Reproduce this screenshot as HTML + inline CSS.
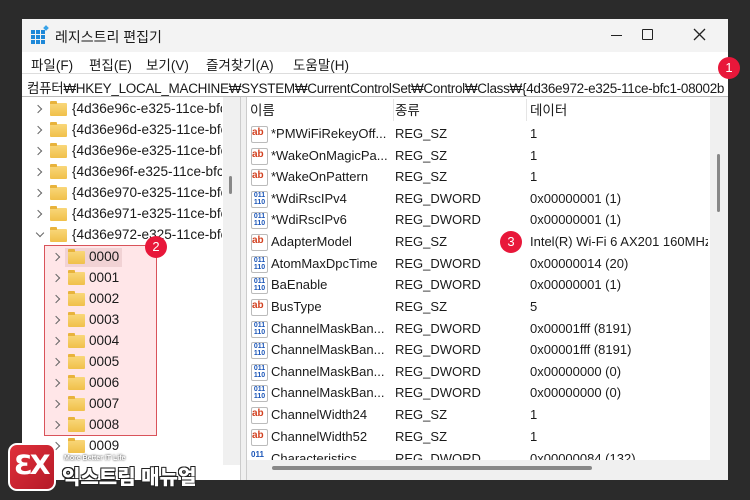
<!DOCTYPE html>
<html><head><meta charset="utf-8"><style>
*{margin:0;padding:0;box-sizing:border-box}
body{width:750px;height:500px;background:#2b2b2b;position:relative;overflow:hidden;font-family:"Liberation Sans","Noto Sans CJK KR",sans-serif;font-size:13px;color:#1a1a1a}
.a{position:absolute;white-space:nowrap}
#win{left:22px;top:19px;width:706px;height:461px;background:#f0f0f0;overflow:hidden}
.fold{position:absolute;width:17px;height:13px;background:linear-gradient(#f9d77a,#f0c04a);border-radius:1px}
.fold:before{content:"";position:absolute;left:0;top:-2px;width:7px;height:3px;background:#e8b33c;border-radius:1px 1px 0 0}
.chev{position:absolute;width:6px;height:6px;border-right:1.3px solid #666;border-bottom:1.3px solid #666;transform:rotate(-45deg)}
.ic{position:absolute;width:17px;height:17px;font-size:10px;font-weight:bold;line-height:11px}
.ab{color:#d2401f;border:1px solid #bbb;border-radius:2px;background:#fff}
.dw{color:#1a55b8;font-size:7px;line-height:7px;border:1px solid #bbb;border-radius:2px;background:#fff;text-align:center}
.badge{position:absolute;width:22px;height:22px;border-radius:50%;background:#e8173a;color:#fff;font-size:13px;text-align:center;line-height:22px}
.tr{font-size:13.6px}
</style></head><body>
<div id="win" class="a">
 <div class="a" style="left:0;top:0;width:706px;height:33px;background:#f3f3f3"></div>
 <svg class="a" style="left:8px;top:6px" width="20" height="20" viewBox="0 0 20 20"><g fill="#1e88d8"><rect x="1" y="5" width="4" height="4"/><rect x="6" y="5" width="4" height="4"/><rect x="11" y="5" width="4" height="4"/><rect x="1" y="10" width="4" height="4"/><rect x="6" y="10" width="4" height="4"/><rect x="11" y="10" width="4" height="4"/><rect x="1" y="15" width="4" height="4"/><rect x="6" y="15" width="4" height="4"/><rect x="11" y="15" width="4" height="4"/></g><rect x="14" y="1" width="4" height="4" fill="#39a3e8" transform="rotate(45 16 3)"/></svg>
 <div class="a" style="left:33px;top:8px;font-size:14px">레지스트리 편집기</div>
 <div class="a" style="left:589px;top:16px;width:11px;height:1.3px;background:#222"></div>
 <div class="a" style="left:620px;top:10px;width:11px;height:11px;border:1.3px solid #222;border-radius:1px"></div>
 <svg class="a" style="left:671px;top:9px" width="13" height="13"><path d="M1 1L12 12M12 1L1 12" stroke="#222" stroke-width="1.3"/></svg>
 <div class="a" style="left:0;top:33px;width:706px;height:21px;background:#fff"></div>
 <div class="a" style="left:9px;top:35px;font-size:13.5px">파일(F)</div>
 <div class="a" style="left:67px;top:35px;font-size:13.5px">편집(E)</div>
 <div class="a" style="left:124px;top:35px;font-size:13.5px">보기(V)</div>
 <div class="a" style="left:184px;top:35px;font-size:13.5px">즐겨찾기(A)</div>
 <div class="a" style="left:271px;top:35px;font-size:13.5px">도움말(H)</div>
 <div class="a" style="left:0;top:54px;width:706px;height:24px;background:#fff;border-top:1px solid #ddd;border-bottom:1px solid #bbb"></div>
 <div class="a" style="left:5px;top:58px;font-size:13.5px;letter-spacing:-0.3px">컴퓨터₩HKEY_LOCAL_MACHINE₩SYSTEM₩CurrentControlSet₩Control₩Class₩{4d36e972-e325-11ce-bfc1-08002b</div>
 <div class="a" style="left:0;top:78px;width:218px;height:383px;background:#fff"></div>
 <div class="a" style="left:201px;top:78px;width:17px;height:368px;background:#f0f0f0"></div>
 <div class="a" style="left:207px;top:157px;width:3px;height:18px;background:#888;border-radius:2px"></div>
 <div class="a" style="left:218px;top:78px;width:7px;height:383px;background:#f0f0f0;border-left:1px solid #ccc;border-right:1px solid #ccc"></div>
 <div class="a" style="left:225px;top:78px;width:481px;height:383px;background:#fff"></div>
 <div class="a" style="left:688px;top:78px;width:18px;height:365px;background:#f0f0f0"></div>
 <div class="a" style="left:695px;top:135px;width:3px;height:58px;background:#888;border-radius:2px"></div>
 <div class="a" style="left:225px;top:441px;width:481px;height:20px;background:#f0f0f0"></div>
 <div class="a" style="left:250px;top:447px;width:320px;height:4px;background:#888;border-radius:2px"></div>
 <div class="a" style="left:228px;top:80px;font-size:13.5px">이름</div>
 <div class="a" style="left:371px;top:80px;width:1px;height:22px;background:#e5e5e5"></div>
 <div class="a" style="left:373px;top:80px;font-size:13.5px">종류</div>
 <div class="a" style="left:504px;top:80px;width:1px;height:22px;background:#e5e5e5"></div>
 <div class="a" style="left:508px;top:80px;font-size:13.5px">데이터</div>
</div>

<div class="a" style="left:22px;top:97px;width:200px;height:360px;overflow:hidden">
<div style="position:absolute;left:-22px;top:-97px;width:750px;height:500px">
<div class="chev a" style="left:35px;top:106px"></div><div class="fold a" style="left:50px;top:103px"></div><div class="a tr" style="left:72px;top:101px">{4d36e96c-e325-11ce-bfc1</div>
<div class="chev a" style="left:35px;top:127px"></div><div class="fold a" style="left:50px;top:124px"></div><div class="a tr" style="left:72px;top:122px">{4d36e96d-e325-11ce-bfc1</div>
<div class="chev a" style="left:35px;top:148px"></div><div class="fold a" style="left:50px;top:145px"></div><div class="a tr" style="left:72px;top:143px">{4d36e96e-e325-11ce-bfc1</div>
<div class="chev a" style="left:35px;top:169px"></div><div class="fold a" style="left:50px;top:166px"></div><div class="a tr" style="left:72px;top:164px">{4d36e96f-e325-11ce-bfc1</div>
<div class="chev a" style="left:35px;top:190px"></div><div class="fold a" style="left:50px;top:187px"></div><div class="a tr" style="left:72px;top:185px">{4d36e970-e325-11ce-bfc1</div>
<div class="chev a" style="left:35px;top:211px"></div><div class="fold a" style="left:50px;top:208px"></div><div class="a tr" style="left:72px;top:206px">{4d36e971-e325-11ce-bfc1</div>
<div class="chev a" style="left:37px;top:230px;transform:rotate(45deg)"></div><div class="fold a" style="left:50px;top:229px"></div><div class="a tr" style="left:72px;top:227px">{4d36e972-e325-11ce-bfc1</div>
</div></div>
<div class="a" style="left:44px;top:245px;width:113px;height:191px;background:rgba(255,80,90,0.14);border:1.3px solid #d9535a"></div>
<div class="a" style="left:65px;top:248px;width:57px;height:19px;background:rgba(200,150,150,0.25)"></div>
<div class="chev a" style="left:53px;top:254px"></div><div class="fold a" style="left:68px;top:251px"></div><div class="a tr" style="left:89px;top:249px">0000</div>
<div class="chev a" style="left:53px;top:275px"></div><div class="fold a" style="left:68px;top:272px"></div><div class="a tr" style="left:89px;top:270px">0001</div>
<div class="chev a" style="left:53px;top:296px"></div><div class="fold a" style="left:68px;top:293px"></div><div class="a tr" style="left:89px;top:291px">0002</div>
<div class="chev a" style="left:53px;top:317px"></div><div class="fold a" style="left:68px;top:314px"></div><div class="a tr" style="left:89px;top:312px">0003</div>
<div class="chev a" style="left:53px;top:338px"></div><div class="fold a" style="left:68px;top:335px"></div><div class="a tr" style="left:89px;top:333px">0004</div>
<div class="chev a" style="left:53px;top:359px"></div><div class="fold a" style="left:68px;top:356px"></div><div class="a tr" style="left:89px;top:354px">0005</div>
<div class="chev a" style="left:53px;top:380px"></div><div class="fold a" style="left:68px;top:377px"></div><div class="a tr" style="left:89px;top:375px">0006</div>
<div class="chev a" style="left:53px;top:401px"></div><div class="fold a" style="left:68px;top:398px"></div><div class="a tr" style="left:89px;top:396px">0007</div>
<div class="chev a" style="left:53px;top:422px"></div><div class="fold a" style="left:68px;top:419px"></div><div class="a tr" style="left:89px;top:417px">0008</div>
<div class="chev a" style="left:53px;top:443px"></div><div class="fold a" style="left:68px;top:440px"></div><div class="a tr" style="left:89px;top:438px">0009</div>

<div style="font-size:13px">
<div class="ic ab a" style="left:251px;top:126px">ab</div><div class="a" style="left:271px;top:126px">*PMWiFiRekeyOff...</div><div class="a" style="left:395px;top:126px">REG_SZ</div><div class="a" style="left:530px;top:126px">1</div>
<div class="ic ab a" style="left:251px;top:148px">ab</div><div class="a" style="left:271px;top:148px">*WakeOnMagicPa...</div><div class="a" style="left:395px;top:148px">REG_SZ</div><div class="a" style="left:530px;top:148px">1</div>
<div class="ic ab a" style="left:251px;top:169px">ab</div><div class="a" style="left:271px;top:169px">*WakeOnPattern</div><div class="a" style="left:395px;top:169px">REG_SZ</div><div class="a" style="left:530px;top:169px">1</div>
<div class="ic dw a" style="left:251px;top:191px">011<br>110</div><div class="a" style="left:271px;top:191px">*WdiRscIPv4</div><div class="a" style="left:395px;top:191px">REG_DWORD</div><div class="a" style="left:530px;top:191px">0x00000001 (1)</div>
<div class="ic dw a" style="left:251px;top:212px">011<br>110</div><div class="a" style="left:271px;top:212px">*WdiRscIPv6</div><div class="a" style="left:395px;top:212px">REG_DWORD</div><div class="a" style="left:530px;top:212px">0x00000001 (1)</div>
<div class="ic ab a" style="left:251px;top:234px">ab</div><div class="a" style="left:271px;top:234px">AdapterModel</div><div class="a" style="left:395px;top:234px">REG_SZ</div><div class="a" style="left:530px;top:234px;width:178px;overflow:hidden">Intel(R) Wi-Fi 6 AX201 160MHz</div>
<div class="ic dw a" style="left:251px;top:256px">011<br>110</div><div class="a" style="left:271px;top:256px">AtomMaxDpcTime</div><div class="a" style="left:395px;top:256px">REG_DWORD</div><div class="a" style="left:530px;top:256px">0x00000014 (20)</div>
<div class="ic dw a" style="left:251px;top:277px">011<br>110</div><div class="a" style="left:271px;top:277px">BaEnable</div><div class="a" style="left:395px;top:277px">REG_DWORD</div><div class="a" style="left:530px;top:277px">0x00000001 (1)</div>
<div class="ic ab a" style="left:251px;top:299px">ab</div><div class="a" style="left:271px;top:299px">BusType</div><div class="a" style="left:395px;top:299px">REG_SZ</div><div class="a" style="left:530px;top:299px">5</div>
<div class="ic dw a" style="left:251px;top:321px">011<br>110</div><div class="a" style="left:271px;top:321px">ChannelMaskBan...</div><div class="a" style="left:395px;top:321px">REG_DWORD</div><div class="a" style="left:530px;top:321px">0x00001fff (8191)</div>
<div class="ic dw a" style="left:251px;top:342px">011<br>110</div><div class="a" style="left:271px;top:342px">ChannelMaskBan...</div><div class="a" style="left:395px;top:342px">REG_DWORD</div><div class="a" style="left:530px;top:342px">0x00001fff (8191)</div>
<div class="ic dw a" style="left:251px;top:364px">011<br>110</div><div class="a" style="left:271px;top:364px">ChannelMaskBan...</div><div class="a" style="left:395px;top:364px">REG_DWORD</div><div class="a" style="left:530px;top:364px">0x00000000 (0)</div>
<div class="ic dw a" style="left:251px;top:385px">011<br>110</div><div class="a" style="left:271px;top:385px">ChannelMaskBan...</div><div class="a" style="left:395px;top:385px">REG_DWORD</div><div class="a" style="left:530px;top:385px">0x00000000 (0)</div>
<div class="ic ab a" style="left:251px;top:407px">ab</div><div class="a" style="left:271px;top:407px">ChannelWidth24</div><div class="a" style="left:395px;top:407px">REG_SZ</div><div class="a" style="left:530px;top:407px">1</div>
<div class="ic ab a" style="left:251px;top:429px">ab</div><div class="a" style="left:271px;top:429px">ChannelWidth52</div><div class="a" style="left:395px;top:429px">REG_SZ</div><div class="a" style="left:530px;top:429px">1</div>
<div class="a" style="left:247px;top:450px;width:463px;height:10px;overflow:hidden"><div class="a" style="left:4px;top:0;color:#1a55b8;font-size:8px;font-weight:bold">011</div><div class="a" style="left:24px;top:1px">Characteristics</div><div class="a" style="left:148px;top:1px">REG_DWORD</div><div class="a" style="left:283px;top:1px">0x00000084 (132)</div></div>
</div>

<div class="badge" style="left:718px;top:57px">1</div>
<div class="badge" style="left:145px;top:236px">2</div>
<div class="badge" style="left:500px;top:231px">3</div>

<div class="a" style="left:8px;top:443px;width:48px;height:48px;background:linear-gradient(135deg,#e0303a,#b51a28);border-radius:9px;border:2px solid #fff"></div>
<div class="a" style="left:14px;top:450px;color:#fff;font-weight:bold;font-size:27px;font-family:'DejaVu Sans',sans-serif;letter-spacing:-3px">ƐX</div>
<div class="a" style="left:64px;top:455px;color:#fff;font-size:7px;font-weight:bold;text-shadow:0 0 2px #000">More Better IT Life</div>
<div class="a" style="left:62px;top:461px;color:#fff;font-size:20px;font-weight:900;text-shadow:-1px -1px 0 #222,1px -1px 0 #222,-1px 1px 0 #222,1px 1px 0 #222">익스트림 매뉴얼</div>
</body></html>
